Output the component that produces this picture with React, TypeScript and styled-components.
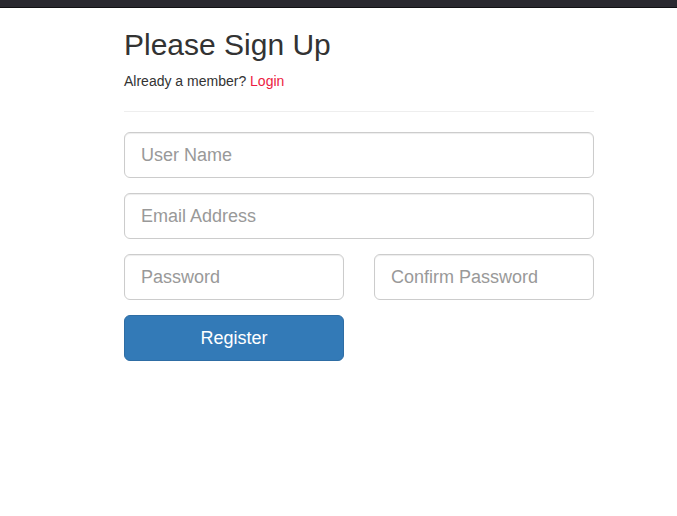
import React from "react";
import styled, { createGlobalStyle } from "styled-components";

const Global = createGlobalStyle`
  html, body { margin: 0; padding: 0; background: #fff; }
  body {
    font-family: "Liberation Sans", Arial, Helvetica, sans-serif;
    font-size: 14px;
    line-height: 1.42857;
    color: #333;
  }
  * { box-sizing: border-box; }
`;

const TopBar = styled.div`
  height: 8px;
  background: #2a2930;
  border-bottom: 1px solid #111114;
`;

const Container = styled.div`
  width: 470px;
  margin-left: 124px;
`;

const Title = styled.h2`
  margin: 20px 0 11px;
  font-size: 30px;
  font-weight: 500;
  line-height: 1.1;
  color: #333;
`;

const Lead = styled.p`
  margin: 0 0 10px;
`;

const LoginLink = styled.a`
  color: #ec1b42;
  text-decoration: none;
`;

const Divider = styled.hr`
  margin: 19px 0 20px;
  border: 0;
  border-top: 1px solid #eee;
`;

const Form = styled.form`
  display: flex;
  flex-direction: column;
  gap: 15px;
`;

const Row = styled.div`
  display: grid;
  grid-template-columns: 220px 220px;
  column-gap: 30px;
`;

const Input = styled.input`
  display: block;
  width: 100%;
  height: 46px;
  padding: 11px 16px 9px;
  font-family: inherit;
  font-size: 18px;
  line-height: 1.3333;
  color: #555;
  background: #fff;
  border: 1px solid #ccc;
  border-radius: 6px;
  box-shadow: inset 0 1px 1px rgba(0, 0, 0, 0.075);
  outline: none;
  &::placeholder { color: #999; }
`;

const Button = styled.button`
  height: 46px;
  padding: 11px 16px 9px;
  font-family: inherit;
  font-size: 18px;
  line-height: 1.3333;
  color: #fff;
  background: #337ab7;
  border: 1px solid #2e6da4;
  border-radius: 6px;
  cursor: pointer;
`;

export default function App() {
  return (
    <>
      <Global />
      <TopBar />
      <Container>
        <Title>Please Sign Up</Title>
        <Lead>
          Already a member? <LoginLink href="#">Login</LoginLink>
        </Lead>
        <Divider />
        <Form onSubmit={(e) => e.preventDefault()}>
          <Input type="text" placeholder="User Name" />
          <Input type="email" placeholder="Email Address" />
          <Row>
            <Input type="password" placeholder="Password" />
            <Input type="password" placeholder="Confirm Password" />
          </Row>
          <Row>
            <Button type="submit">Register</Button>
          </Row>
        </Form>
      </Container>
    </>
  );
}
